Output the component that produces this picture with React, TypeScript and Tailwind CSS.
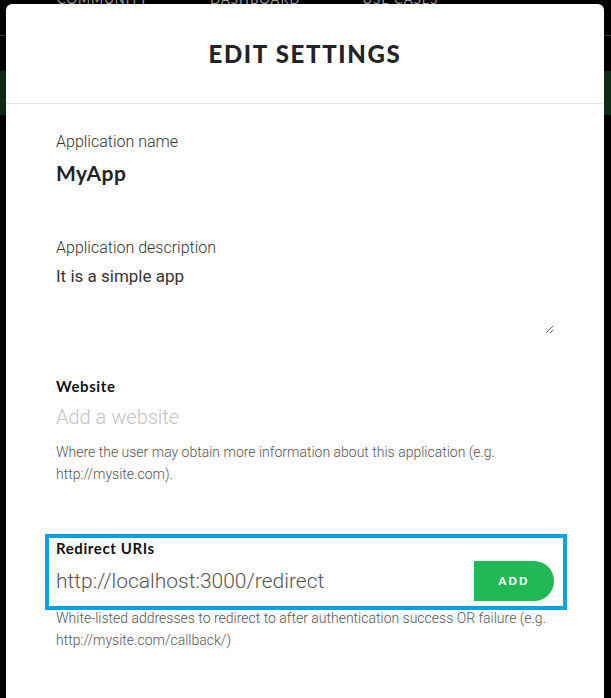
export default function App() {
  return (
    <div className="relative h-[698px] w-full overflow-hidden bg-black font-['Roboto',sans-serif]">
      {/* page behind the dialog */}
      <div className="h-[45px] border-b border-[#333]">
        <nav className="-mt-[9px] flex gap-[62px] pl-[57px] font-['Lato',sans-serif] text-[13px] leading-[16px] tracking-[0.08em] text-[#9a9a9a]">
          <span>COMMUNITY</span>
          <span>DASHBOARD</span>
          <span>USE CASES</span>
        </nav>
      </div>
      <div className="mt-[35px] h-[44px] bg-[#0c2b15]" />

      <SettingsDialog />
    </div>
  );
}

function SettingsDialog() {
  return (
    <div className="absolute left-[6px] top-[4px] h-[720px] w-[598px] rounded-t-[6px] bg-white">
      <div className="flex h-[100px] items-center justify-center border-b border-[#e3e3e3]">
        <h1 className="font-['Lato',sans-serif] text-[24px] font-black leading-none tracking-[0.07em] text-[#222326]">
          EDIT SETTINGS
        </h1>
      </div>

      <div className="px-[50px] pt-[27px]">
        <label className="block text-[16px] font-light leading-[22px] text-[#333]">
          Application name
        </label>
        <p className="mt-[8px] font-['Lato',sans-serif] text-[21px] font-bold leading-[24px] tracking-[0.02em] text-[#222326]">
          MyApp
        </p>

        <label className="mt-[52px] block text-[16px] font-light leading-[22px] text-[#333]">
          Application description
        </label>
        <textarea
          defaultValue="It is a simple app"
          className="mt-[5px] block h-[70px] w-full resize-y p-0 text-[17px] leading-[24px] text-[#333] outline-none"
        />

        <label className="mt-[42px] block font-['Lato',sans-serif] text-[15px] font-bold leading-[20px] tracking-[0.04em] text-[#111]">
          Website
        </label>
        <input
          placeholder="Add a website"
          className="mt-[7px] block h-[28px] w-full p-0 text-[20px] font-light leading-[28px] text-[#333] outline-none placeholder:text-[#c4c4c4]"
        />
        <p className="mt-[10px] text-[14px] font-light leading-[22px] text-[#555]">
          Where the user may obtain more information about this application (e.g.
          http://mysite.com).
        </p>

        <div className="relative mt-[53px]">
          <label className="block font-['Lato',sans-serif] text-[15px] font-bold leading-[20px] tracking-[0.04em] text-[#111]">
            Redirect URIs
          </label>
          <div className="mt-[3px] flex h-[40px] items-center">
            <input
              defaultValue="http://localhost:3000/redirect"
              className="h-full min-w-0 flex-1 p-0 text-[21px] font-light text-[#555] outline-none"
            />
            <button className="h-[40px] w-[80px] rounded-r-full bg-[#1fb955] font-['Lato',sans-serif] text-[11px] font-black tracking-[0.2em] text-white">
              ADD
            </button>
          </div>
          {/* highlight frame drawn over the field */}
          <span className="pointer-events-none absolute -bottom-[9px] -left-[11px] -right-[13px] -top-[4px] border-4 border-[#04a4e4]" />
        </div>
        <p className="mt-[6px] text-[14px] font-light leading-[22px] text-[#555]">
          White-listed addresses to redirect to after authentication success OR failure (e.g.
          http://mysite.com/callback/)
        </p>
      </div>
    </div>
  );
}
